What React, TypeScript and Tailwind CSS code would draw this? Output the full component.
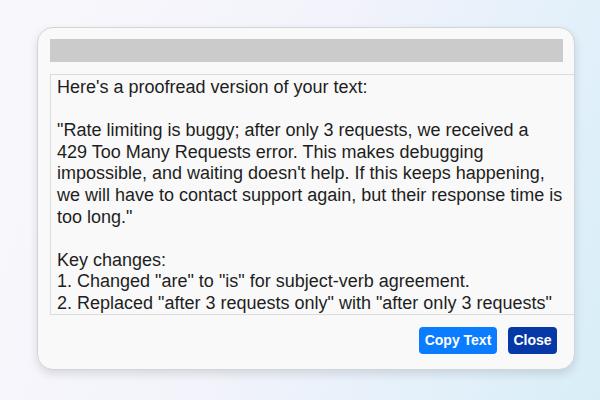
export default function App() {
  const lines = [
    "Here's a proofread version of your text:",
    "",
    "\"Rate limiting is buggy; after only 3 requests, we received a",
    "429 Too Many Requests error. This makes debugging",
    "impossible, and waiting doesn't help. If this keeps happening,",
    "we will have to contact support again, but their response time is",
    "too long.\"",
    "",
    "Key changes:",
    "1. Changed \"are\" to \"is\" for subject-verb agreement.",
    "2. Replaced \"after 3 requests only\" with \"after only 3 requests\"",
  ];
  return (
    <div className="w-[600px] h-[400px] bg-[linear-gradient(110deg,#f8f8fc_0%,#f3f3fb_45%,#e2f0fa_80%,#d8eef7_100%)] pt-[27px] pl-[37px] font-['Liberation_Sans',Arial,sans-serif]">
      <div className="w-[538px] h-[343px] rounded-[16px] border border-[#cfd6da] bg-[#f9f9f9] shadow-[0_4px_10px_rgba(0,0,0,0.12)] overflow-hidden pt-[11px] pl-[12px] pr-[12px] flex flex-col">
        <div className="h-[23px] w-[513px] bg-[#cbcbcb]" />
        <div className="mt-[12px] w-[530px] h-[241px] border border-[#dcdcdc] bg-[#f9f9f9] overflow-hidden pl-[6px] pt-[2px] text-[18px] leading-[21.6px] text-[#1e1e1e]">
          {lines.map((l, i) => (
            <div key={i} className="whitespace-pre h-[21.6px]">{l}</div>
          ))}
        </div>
        <div className="mt-[12px] flex justify-end gap-[11px] pr-[5px]">
          <button className="h-[27px] w-[78px] rounded-[4px] bg-[#0a7cff] text-white font-bold text-[14px]">Copy Text</button>
          <button className="h-[27px] w-[49px] rounded-[4px] bg-[#0638a8] text-white font-bold text-[14px]">Close</button>
        </div>
      </div>
    </div>
  );
}
